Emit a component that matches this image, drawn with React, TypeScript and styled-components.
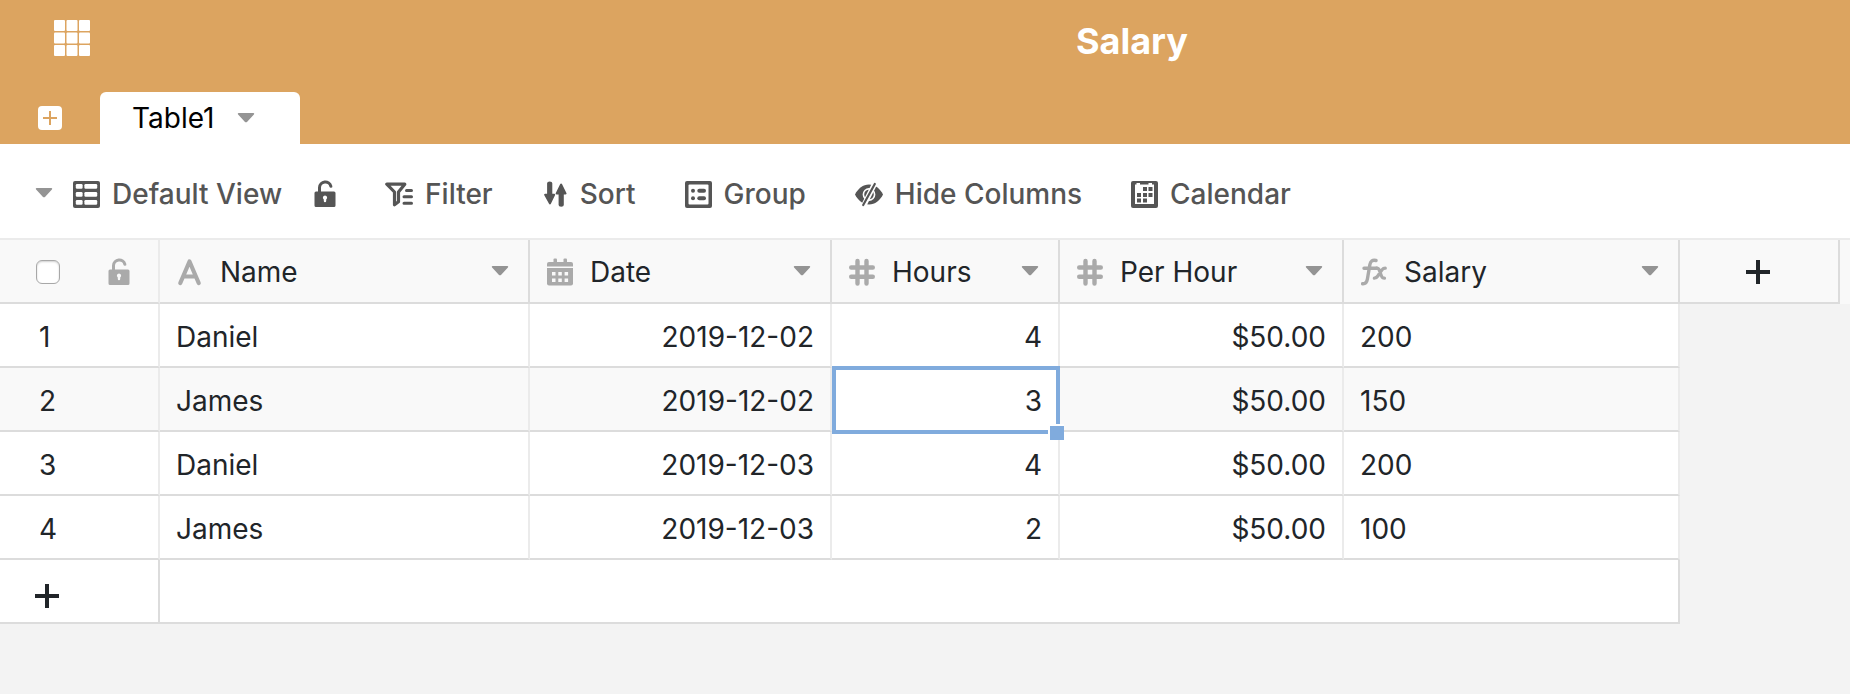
import React, { useState } from "react";
import styled, { createGlobalStyle } from "styled-components";

const GlobalStyle = createGlobalStyle`
  * { box-sizing: border-box; }
  body {
    margin: 0;
    background: #f3f3f3;
    color: #212529;
    font-family: Inter, "Liberation Sans", sans-serif;
    font-size: 28px;
    line-height: 34px;
  }
  button {
    margin: 0;
    padding: 0;
    border: 0;
    background: none;
    color: inherit;
    font: inherit;
    cursor: pointer;
  }
`;

const Header = styled.header`
  display: flex;
  flex-direction: column;
  height: 144px;
  background: #dca460;
`;

const TitleBar = styled.div`
  display: grid;
  grid-template-columns: 414px 1fr;
  align-items: center;
  height: 92px;
  flex: none;
  padding-bottom: 10px;
`;

const AppsButton = styled.button`
  display: flex;
  justify-self: start;
  margin-left: 54px;
  margin-bottom: 6px;
`;

const Title = styled.h1`
  margin: 0;
  color: #fff;
  font-size: 36px;
  line-height: 44px;
  font-weight: 700;
  text-align: center;
`;

const TabStrip = styled.nav`
  display: flex;
  align-items: stretch;
  flex: 1;
`;

const AddTabButton = styled.button`
  display: flex;
  align-items: center;
  justify-content: center;
  width: 100px;
`;

const Tab = styled.button`
  display: flex;
  align-items: center;
  gap: 23px;
  width: 200px;
  padding: 0 32px;
  border-radius: 6px 6px 0 0;
  background: #fff;
  color: #000;
`;

const Toolbar = styled.div`
  display: flex;
  align-items: center;
  gap: 49px;
  height: 96px;
  padding: 6px 35px 0;
  border-bottom: 2px solid #ebebeb;
  background: #fff;
  color: #555;
  font-weight: 500;
`;

const ViewGroup = styled.div`
  display: flex;
  align-items: center;
  gap: 20px;
`;

const ToolButton = styled.button`
  display: flex;
  align-items: center;
  gap: 12px;
  white-space: nowrap;
`;

const LockButton = styled.button`
  display: flex;
  margin-left: 12px;
`;

const Grid = styled.table`
  width: 100%;
  table-layout: fixed;
  border-collapse: separate;
  border-spacing: 0;
`;

const Column = styled.col<{ $width?: number }>`
  width: ${(p) => (p.$width ? `${p.$width}px` : "auto")};
`;

const HeadCell = styled.th<{ $soft?: boolean }>`
  height: 64px;
  padding: 0 19px 0 17px;
  border-right: 2px solid ${(p) => (p.$soft ? "#ebebeb" : "#dcdcdc")};
  border-bottom: 2px solid #dcdcdc;
  background: #f9f9f9;
  font-weight: 400;
  text-align: left;
`;

const HeadFiller = styled.td`
  background: #f9f9f9;
`;

const HeadContent = styled.div`
  display: flex;
  align-items: center;
  gap: 17px;
  padding-top: 2px;
`;

const HeadLabel = styled.span`
  flex: 1;
`;

const CaretButton = styled.button`
  display: flex;
  padding-bottom: 2px;
`;

const SelectAll = styled.div`
  display: flex;
  align-items: center;
  gap: 48px;
  padding: 2px 0 0 19px;
`;

const CheckBox = styled.input`
  appearance: none;
  width: 24px;
  height: 24px;
  margin: 0;
  border: 1px solid #a8a8a8;
  border-radius: 6px;
  background: #fff;
  box-shadow: inset 0 1px 2px #d0d0d0;
`;

const AddColumnButton = styled.button`
  display: flex;
  width: 100%;
  padding-top: 2px;
  justify-content: center;
`;

const Row = styled.tr<{ $active: boolean }>`
  background: ${(p) => (p.$active ? "#f9f9f9" : "#fff")};
`;

const Cell = styled.td<{ $end?: boolean; $selected?: boolean }>`
  position: relative;
  z-index: ${(p) => (p.$selected ? 1 : "auto")};
  height: 64px;
  padding: 4px 16px 0;
  border-right: 2px solid #ebebeb;
  border-bottom: 2px solid #dcdcdc;
  background: ${(p) => (p.$selected ? "#fff" : "inherit")};
  text-align: ${(p) => (p.$end ? "right" : "left")};
`;

const RowNumber = styled(Cell).attrs({ as: "th", scope: "row" })`
  padding: 4px 0 0 39px;
  font-weight: 400;
`;

const Blank = styled.td`
  background: #f3f3f3;
`;

const Selection = styled.span`
  position: absolute;
  inset: -2px -2px -4px 0;
  border: 4px solid #80abdd;
  pointer-events: none;
`;

const FillHandle = styled.span`
  position: absolute;
  right: -6px;
  bottom: -10px;
  width: 16px;
  height: 16px;
  border: solid #fff;
  border-width: 2px 0 0 2px;
  background: #80abdd;
  cursor: crosshair;
`;

const AddRowCell = styled.td`
  height: 64px;
  padding: 10px 0 0 35px;
  border-right: 2px solid #dcdcdc;
  border-bottom: 2px solid #dcdcdc;
  background: #fff;
`;

const AddRowButton = styled.button`
  display: flex;
`;

const Caret = () => (
  <svg width="18" height="12" viewBox="0 0 18 12" aria-hidden="true">
    <path d="M1.6 1h14.8c.8 0 1.1.9.5 1.5L10 9.9c-.6.6-1.4.6-2 0L1.1 2.5C.5 1.9.8 1 1.6 1z" fill="#949494" />
  </svg>
);

const AppsIcon = () => (
  <svg width="36" height="36" viewBox="0 0 36 36" fill="#fff" aria-hidden="true">
    {[0, 12.5, 25].map((y) =>
      [0, 12.5, 25].map((x) => <rect key={`${x}-${y}`} x={x} y={y} width="11" height="11" rx="1" />)
    )}
  </svg>
);

const AddTabIcon = () => (
  <svg width="24" height="24" viewBox="0 0 24 24" aria-hidden="true">
    <rect width="24" height="24" rx="4" fill="#fff" />
    <path d="M12 5v14M5 12h14" stroke="#dca460" strokeWidth="2" />
  </svg>
);

const PlusIcon = () => (
  <svg width="24" height="24" viewBox="0 0 24 24" aria-hidden="true">
    <path d="M12 0v24M0 12h24" stroke="#212529" strokeWidth="4" />
  </svg>
);

const LockIcon = ({ color }: { color: string }) => (
  <svg width="22" height="28" viewBox="0 0 22 28" aria-hidden="true">
    <path d="M5.5 12V7.5a5.8 5.8 0 0 1 11.4-1.2" fill="none" stroke={color} strokeWidth="3" strokeLinecap="round" />
    <path
      fillRule="evenodd"
      fill={color}
      d="M2 11.5h18a1.5 1.5 0 0 1 1.5 1.5v12.5A1.5 1.5 0 0 1 20 27H2a1.5 1.5 0 0 1-1.5-1.5V13A1.5 1.5 0 0 1 2 11.5zM11 15.5a2.2 2.2 0 0 0-1.2 4V21a1.2 1.2 0 0 0 2.4 0v-1.5a2.2 2.2 0 0 0-1.2-4z"
    />
  </svg>
);

const TableIcon = () => (
  <svg width="27" height="27" viewBox="0 0 27 27" aria-hidden="true">
    <rect width="27" height="27" rx="2" fill="#555" />
    <g fill="#fff">
      {[3, 11, 19].map((y) => (
        <React.Fragment key={y}>
          <rect x="2.8" y={y} width="6.8" height="4.8" rx="1.2" />
          <rect x="11.4" y={y} width="12.8" height="4.8" rx="1.2" />
        </React.Fragment>
      ))}
    </g>
  </svg>
);

const FilterIcon = () => (
  <svg width="28" height="26" viewBox="0 0 28 26" fill="none" stroke="#555" strokeLinecap="round" strokeLinejoin="round" aria-hidden="true">
    <path d="M1.8 3.2h18l-6.3 7.8v9.8l-4 3V11z" strokeWidth="3.2" />
    <path d="M21.5 9.5h5M19 15.8h7.5M19 22.2h7.5" strokeWidth="3" />
  </svg>
);

const SortIcon = () => (
  <svg width="26" height="26" viewBox="-2 0 26 26" fill="#555" aria-hidden="true">
    <path d="M3.1 2.2a2.6 1.8 0 0 1 5.2 0V12.8h2c.9 0 1.1.8.7 1.5l-4.1 8.5c-.4.9-1.5.9-1.9 0L.3 14.3c-.4-.7 0-1.5.8-1.5h2z" />
    <path d="M19.8 24a2.6 1.8 0 0 1-5.2 0V13.500h-2c-.9 0-1.2-.8-.8-1.500l4.300-8.800c.4-.9 1.600-.9 2 0l4.300 8.800c.4.700 0 1.500-.8 1.500h-1.800z" />
  </svg>
);

const GroupIcon = () => (
  <svg width="27" height="27" viewBox="0 0 27 27" aria-hidden="true">
    <rect width="27" height="27" rx="2" fill="#555" />
    <rect x="3.5" y="3.5" width="20" height="20" rx="1" fill="#fff" />
    <g fill="#555">
      <circle cx="8" cy="9.8" r="2" />
      <circle cx="8" cy="17.2" r="2" />
      <rect x="12.3" y="7.8" width="8.7" height="4" rx="2" />
      <rect x="12.3" y="15.2" width="8.7" height="4" rx="2" />
    </g>
  </svg>
);

const HideIcon = () => (
  <svg width="28" height="26" viewBox="0 0 28 26" aria-hidden="true">
    <path d="M0 13.5C3 7.5 8 3.5 14 3.5s11 4 14 10C25 19.5 20 23.5 14 23.5S3 19.5 0 13.5z" fill="#555" />
    <circle cx="14" cy="13.5" r="5.6" fill="none" stroke="#fff" strokeWidth="1.6" />
    <path d="M20 2L8.5 25" stroke="#fff" strokeWidth="5.2" />
    <path d="M19.8 3L8.2 24" stroke="#555" strokeWidth="2.2" strokeLinecap="round" />
  </svg>
);

const CalendarIcon = () => (
  <svg width="27" height="27" viewBox="0 0 27 27" aria-hidden="true">
    <rect width="27" height="27" rx="2" fill="#555" />
    <path d="M4 3.5h1.5V2H9v1.5h8.500V2H21v1.500h2V23H4z" fill="#fff" />
    <g fill="#555">
      {[[12, 6], [17.5, 6], [6, 12], [12, 12], [17.5, 12], [6, 17.5], [12, 17.5]].map(([x, y]) => (
        <rect key={`${x}-${y}`} x={x} y={y} width="4" height="4" />
      ))}
    </g>
  </svg>
);

const TextTypeIcon = () => (
  <svg width="26" height="28" viewBox="1 0 26 28" fill="none" stroke="#aaa" strokeLinecap="round" strokeLinejoin="round" aria-hidden="true">
    <path d="M4.3 25L13.5 3.5L22.7 25M8 18.5h11" strokeWidth="4.2" />
  </svg>
);

const DateTypeIcon = () => (
  <svg width="26" height="28" viewBox="0 0 26 28" fill="#aaa" aria-hidden="true">
    <rect x="6.5" y="0.5" width="3.5" height="5" rx="1" />
    <rect x="16.5" y="0.5" width="3.5" height="5" rx="1" />
    <path d="M2 4h22a2 2 0 0 1 2 2v2.5H0V6a2 2 0 0 1 2-2z" />
    <path d="M0 10h26v15.5a2 2 0 0 1-2 2H2a2 2 0 0 1-2-2z" />
    <g fill="#f9f9f9">
      {[14, 20.5].map((y) => [5, 11.3, 17.6].map((x) => <rect key={`${x}-${y}`} x={x} y={y} width="3.5" height="3.5" />))}
    </g>
  </svg>
);

const NumberTypeIcon = () => (
  <svg width="26" height="28" viewBox="0 0 26 28" fill="none" stroke="#aaa" strokeLinecap="round" aria-hidden="true">
    <path d="M8.5 3v22.5M17.5 3v22.5M2.2 9.5h21.6M2.2 18.8h21.6" strokeWidth="4.4" />
  </svg>
);

const FormulaTypeIcon = () => (
  <svg width="26" height="28" viewBox="0 0 26 28" fill="none" stroke="#aaa" strokeLinecap="round" strokeLinejoin="round" aria-hidden="true">
    <path d="M15 2.5c-3.5-.8-5.5.6-6.1 4L6.4 21c-.6 3.5-2 5-4.8 4.8M3 10.2h13" strokeWidth="3.4" />
    <path d="M15.5 10.2c1.5 0 2.3.6 2.8 2l2.2 5.8c.6 1.6 1.3 2.2 3 2.2M24.3 10.2c-1.5 0-2.5.6-3.5 1.8l-4 6c-.9 1.4-1.9 2.2-3.5 2.2" strokeWidth="3.2" />
  </svg>
);

type ColumnKey = "name" | "date" | "hours" | "rate" | "salary";

const columns: { key: ColumnKey; label: string; width: number; end?: boolean; Icon: () => React.JSX.Element }[] = [
  { key: "name", label: "Name", width: 370, Icon: TextTypeIcon },
  { key: "date", label: "Date", width: 302, end: true, Icon: DateTypeIcon },
  { key: "hours", label: "Hours", width: 228, end: true, Icon: NumberTypeIcon },
  { key: "rate", label: "Per Hour", width: 284, end: true, Icon: NumberTypeIcon },
  { key: "salary", label: "Salary", width: 336, Icon: FormulaTypeIcon },
];

const rows: Record<ColumnKey, string>[] = [
  { name: "Daniel", date: "2019-12-02", hours: "4", rate: "$50.00", salary: "200" },
  { name: "James", date: "2019-12-02", hours: "3", rate: "$50.00", salary: "150" },
  { name: "Daniel", date: "2019-12-03", hours: "4", rate: "$50.00", salary: "200" },
  { name: "James", date: "2019-12-03", hours: "2", rate: "$50.00", salary: "100" },
];

const tools = [
  { label: "Filter", Icon: FilterIcon },
  { label: "Sort", Icon: SortIcon },
  { label: "Group", Icon: GroupIcon },
  { label: "Hide Columns", Icon: HideIcon },
  { label: "Calendar", Icon: CalendarIcon },
];

export default function App() {
  const [selected, setSelected] = useState<{ row: number; key: ColumnKey }>({ row: 1, key: "hours" });

  return (
    <>
      <GlobalStyle />
      <Header>
        <TitleBar>
          <AppsButton aria-label="Apps"><AppsIcon /></AppsButton>
          <Title>Salary</Title>
        </TitleBar>
        <TabStrip>
          <AddTabButton aria-label="Add table"><AddTabIcon /></AddTabButton>
          <Tab>Table1<Caret /></Tab>
        </TabStrip>
      </Header>
      <Toolbar>
        <ViewGroup>
          <CaretButton aria-label="Views"><Caret /></CaretButton>
          <ToolButton><TableIcon />Default View</ToolButton>
          <LockButton aria-label="Lock view"><LockIcon color="#555" /></LockButton>
        </ViewGroup>
        {tools.map(({ label, Icon }) => (
          <ToolButton key={label}><Icon />{label}</ToolButton>
        ))}
      </Toolbar>
      <Grid>
        <colgroup>
          <Column $width={160} />
          {columns.map((c) => <Column key={c.key} $width={c.width} />)}
          <Column $width={160} />
          <Column />
        </colgroup>
        <thead>
          <tr>
            <HeadCell $soft>
              <SelectAll>
                <CheckBox type="checkbox" aria-label="Select all rows" />
                <LockIcon color="#aaa" />
              </SelectAll>
            </HeadCell>
            {columns.map(({ key, label, Icon }) => (
              <HeadCell key={key} scope="col">
                <HeadContent>
                  <Icon />
                  <HeadLabel>{label}</HeadLabel>
                  <CaretButton aria-label={`${label} options`}><Caret /></CaretButton>
                </HeadContent>
              </HeadCell>
            ))}
            <HeadCell>
              <AddColumnButton aria-label="Add column"><PlusIcon /></AddColumnButton>
            </HeadCell>
            <HeadFiller />
          </tr>
        </thead>
        <tbody>
          {rows.map((row, i) => (
            <Row key={i} $active={selected.row === i}>
              <RowNumber>{i + 1}</RowNumber>
              {columns.map(({ key, end }) => {
                const isSelected = selected.row === i && selected.key === key;
                return (
                  <Cell key={key} $end={end} $selected={isSelected} onClick={() => setSelected({ row: i, key })}>
                    {row[key]}
                    {isSelected && <><Selection /><FillHandle /></>}
                  </Cell>
                );
              })}
              <Blank colSpan={2} />
            </Row>
          ))}
          <tr>
            <AddRowCell>
              <AddRowButton aria-label="Add row"><PlusIcon /></AddRowButton>
            </AddRowCell>
            <AddRowCell colSpan={columns.length} />
            <Blank colSpan={2} />
          </tr>
        </tbody>
      </Grid>
    </>
  );
}
